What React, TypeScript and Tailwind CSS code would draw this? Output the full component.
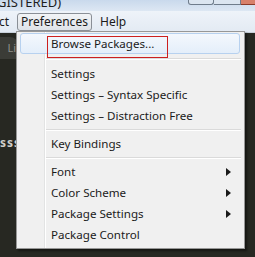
import React from "react";

const font = { fontFamily: '"Noto Sans", "Open Sans", sans-serif' };

function Arrow() {
  return (
    <svg width="5" height="8" viewBox="0 0 5 8" className="absolute right-[12px] top-1/2 -translate-y-1/2">
      <path d="M0 0 L5 4 L0 8 Z" fill="#1a1a1a" />
    </svg>
  );
}

function Item({ label, arrow }: { label: string; arrow?: boolean }) {
  return (
    <div className="relative h-[21px] flex items-center pl-[33px] text-[11.6px] text-[#1b1b1b]">
      <span>{label}</span>
      {arrow && <Arrow />}
    </div>
  );
}

function Sep({ h }: { h: string }) {
  return (
    <div className={`${h} flex items-center pl-[28px] pr-[2px]`}>
      <div className="h-px w-full bg-[#dadada] border-b border-white box-content" />
    </div>
  );
}

export default function App() {
  return (
    <div className="relative w-[255px] h-[257px] overflow-hidden flex flex-col bg-[#272822]" style={font}>
      {/* title bar */}
      <div className="relative h-[11px] bg-gradient-to-b from-[#c9d9ec] to-[#dde7f3] overflow-hidden">
        <div className="absolute left-[-3px] top-[-6px] text-[13px] leading-[16px] text-[#1e1e1e]">GISTERED)</div>
        <div className="absolute right-0 top-0 flex h-[5px]">
          <div className="w-[26px] h-[5px] border border-t-0 border-[#6f7c8b] rounded-b-[3px] bg-[#dbe5f0]" />
          <div className="w-[27px] h-[5px] border border-t-0 border-l-0 border-[#6f7c8b] bg-[#dbe5f0]" />
          <div className="w-[14px] h-[5px] border-b border-[#8a3a2a] bg-[#d8806a]" />
        </div>
      </div>
      {/* menu bar */}
      <div className="h-[22px] bg-gradient-to-b from-[#eef3f9] to-[#e3eaf3] flex items-center text-[12px] text-[#1a1a1a] border-b border-[#c8d0da]">
        <span className="ml-[-1px] w-[18px]">ct</span>
        <div className="h-[18px] w-[75px] flex items-center justify-center rounded-[3px] border border-[#8a8f96] bg-gradient-to-b from-[#f2f4f6] to-[#dfe3e8]">
          Preferences
        </div>
        <span className="ml-[8px]">Help</span>
      </div>
      {/* editor area */}
      <div className="relative flex-1 bg-[#272822]">
        <div className="absolute left-[-8px] top-[4px] w-[26px] h-[22px] rounded-t-[8px] bg-[#3b3c37] flex items-center justify-end pr-[2px] text-[11px] text-[#8f9089]">
          Li
        </div>
        <div className="absolute left-0 top-[101px] text-[12px] font-bold text-[#d0d0cb] tracking-[1px]">sss</div>
        {/* dropdown menu */}
        <div className="absolute left-[16px] top-[-2px] w-[229px] h-[218px] bg-[#f0f0f0] border border-[#979797] shadow-[2px_2px_2px_rgba(0,0,0,0.45)] pt-[1px] px-[1px]">
          <div className="absolute left-[27px] top-0 bottom-0 w-px bg-[#e2e3e3]" />
          <div className="absolute left-[28px] top-0 bottom-0 w-px bg-white" />
          <div className="relative h-[21px] flex items-center pl-[33px] text-[11.6px] text-[#1b1b1b] ml-[3px] mr-[2px]">
            <div className="absolute left-[-1px] right-[1px] top-0 bottom-0 rounded-[3px] border border-[#b7d1ef] bg-gradient-to-b from-[#f4f8fd] to-[#e4eefa]" />
            <div className="absolute left-[26px] top-[3px] w-[121px] h-[22px] border border-[#cc1f1f]" />
            <span className="relative -ml-[3px]">Browse Packages...</span>
          </div>
          <Sep h="h-[9px]" />
          <Item label="Settings" />
          <Item label="Settings – Syntax Specific" />
          <Item label="Settings – Distraction Free" />
          <Sep h="h-[7px]" />
          <Item label="Key Bindings" />
          <Sep h="h-[7px]" />
          <Item label="Font" arrow />
          <Item label="Color Scheme" arrow />
          <Item label="Package Settings" arrow />
          <Item label="Package Control" />
        </div>
      </div>
    </div>
  );
}
